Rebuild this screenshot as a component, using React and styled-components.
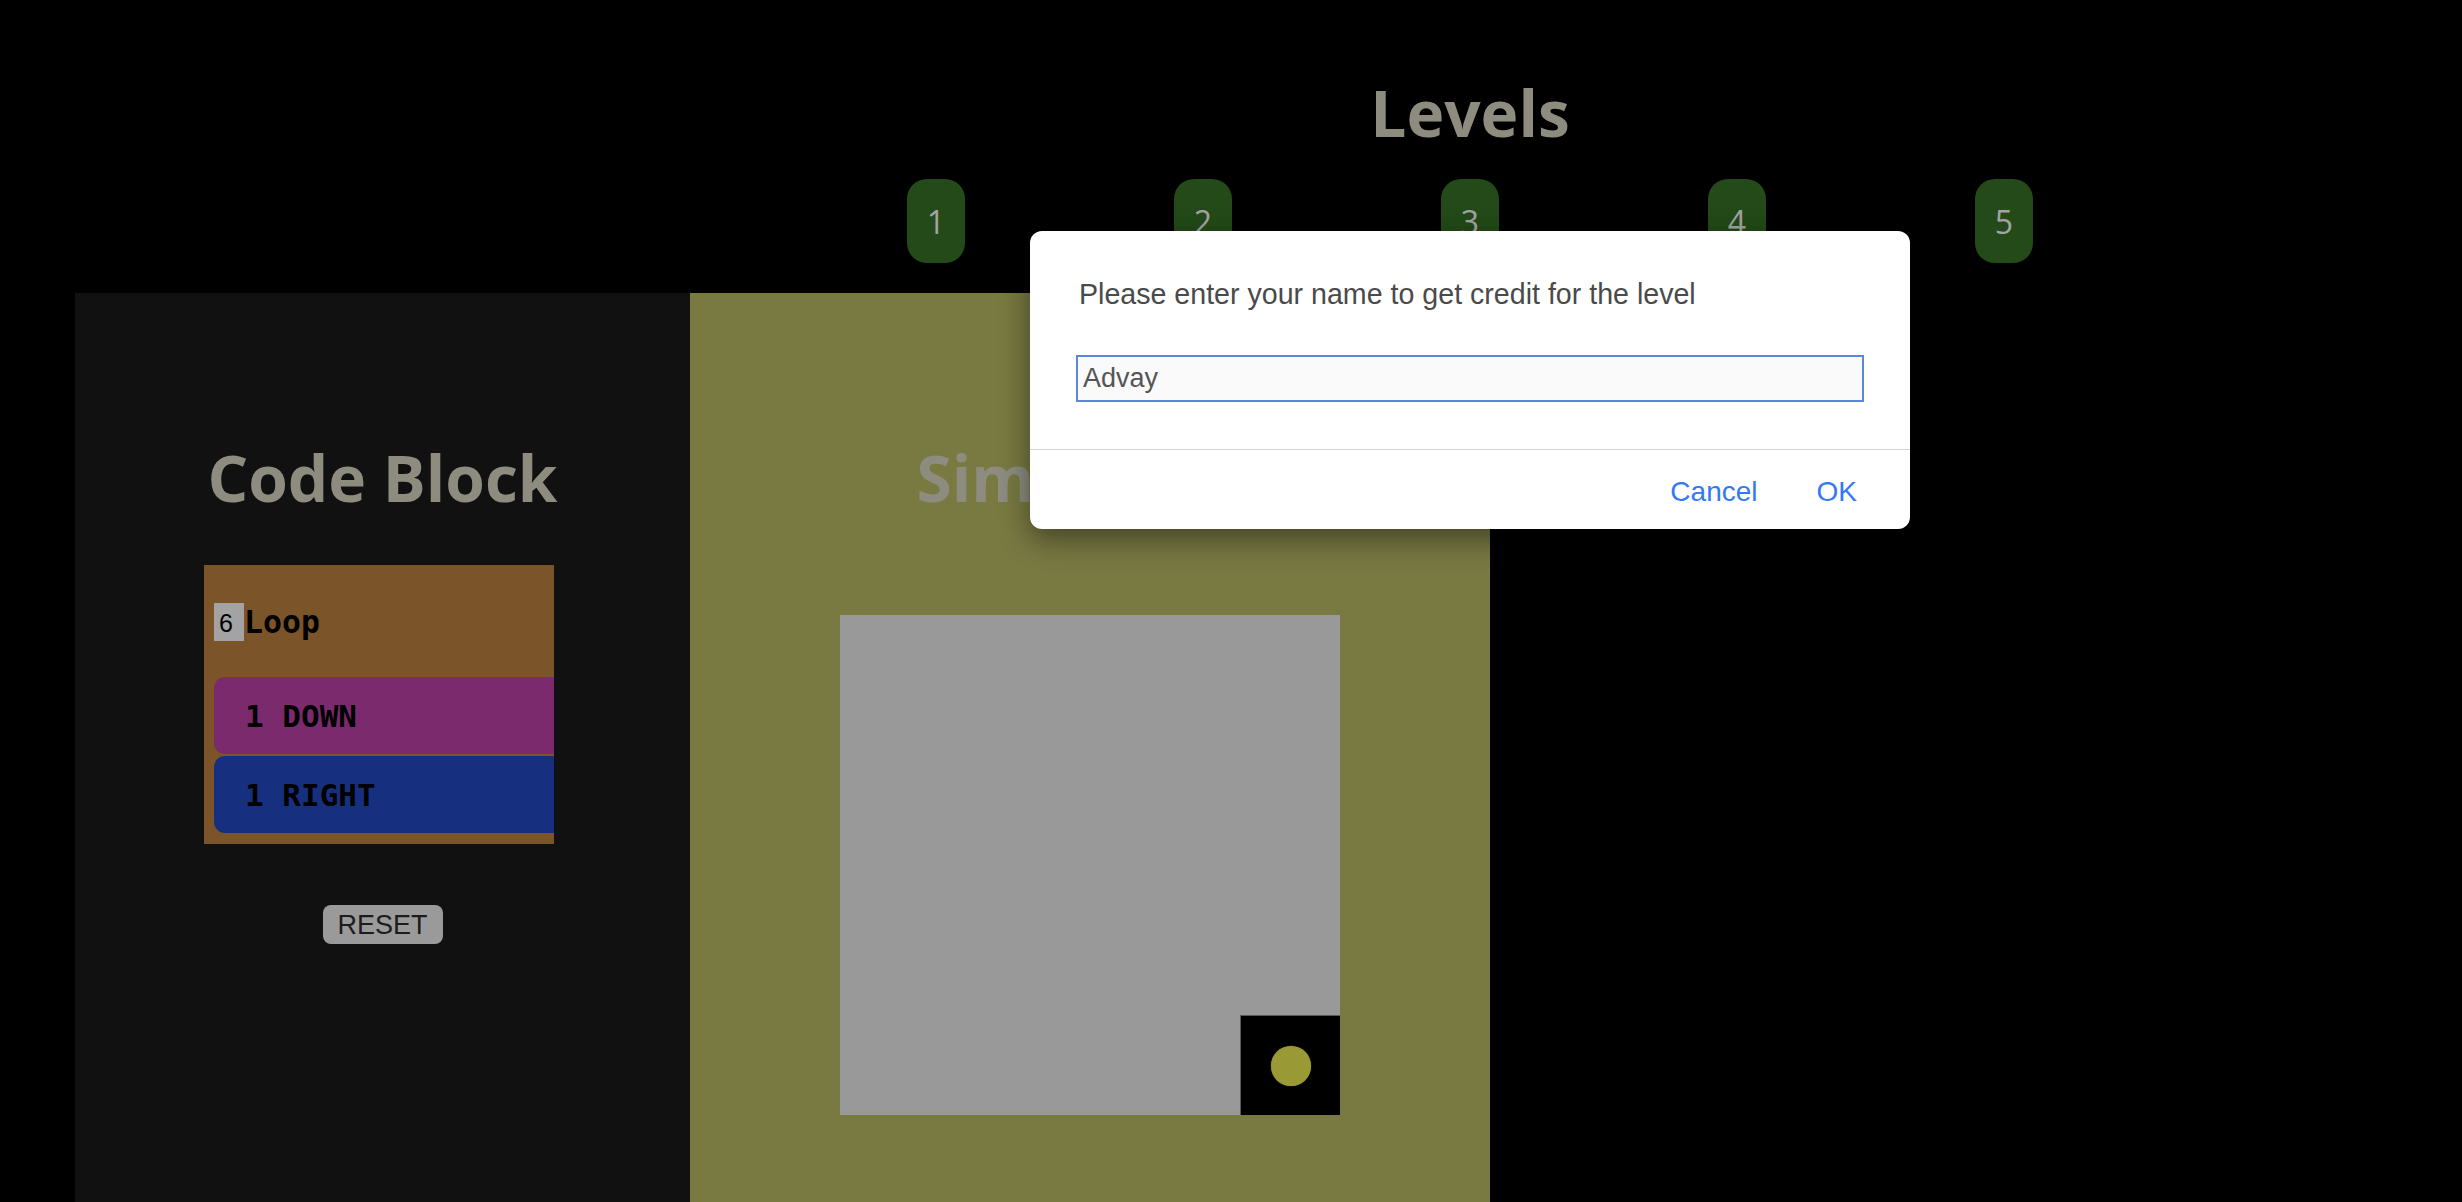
import React, { useState } from 'react';
import styled, { createGlobalStyle } from 'styled-components';

const levels = [1, 2, 3, 4, 5];
const GRID = 5;
const goal = { row: 4, col: 4 };

const commands = [
  { label: '1 DOWN', color: '#7c2a6e' },
  { label: '1 RIGHT', color: '#16307f' },
];

const App = () => {
  const [name, setName] = useState('Advay');
  const [loops, setLoops] = useState('6');

  const cells = Array(GRID * GRID)
    .fill(0)
    .map((e, i) => i);

  return (
    <>
      <GlobalStyle />
      <StyledHeader>
        <StyledTitle>Levels</StyledTitle>
        <StyledLevelRow>
          {levels.map((level) => (
            <StyledLevelButton key={level}>{level}</StyledLevelButton>
          ))}
        </StyledLevelRow>
      </StyledHeader>

      <StyledPanels>
        <StyledCodePanel>
          <StyledPanelTitle>Code Block</StyledPanelTitle>
          <StyledLoopBlock>
            <StyledLoopHead>
              <StyledLoopCount
                value={loops}
                onChange={(e) => setLoops(e.target.value)}
              />
              Loop
            </StyledLoopHead>
            {commands.map((cmd) => (
              <StyledCommand key={cmd.label} color={cmd.color}>
                {cmd.label}
              </StyledCommand>
            ))}
          </StyledLoopBlock>
          <StyledResetButton>RESET</StyledResetButton>
        </StyledCodePanel>

        <StyledSimPanel>
          <StyledPanelTitle>Simulation</StyledPanelTitle>
          <StyledGrid>
            {cells.map((i) => {
              const isGoal =
                Math.floor(i / GRID) === goal.row && i % GRID === goal.col;
              return (
                <StyledCell key={i} isGoal={isGoal}>
                  {isGoal && <StyledBall />}
                </StyledCell>
              );
            })}
          </StyledGrid>
        </StyledSimPanel>
      </StyledPanels>

      <StyledDialog>
        <StyledDialogBody>
          <StyledDialogMessage>
            Please enter your name to get credit for the level
          </StyledDialogMessage>
          <StyledDialogInput
            value={name}
            onChange={(e) => setName(e.target.value)}
          />
        </StyledDialogBody>
        <StyledDialogFooter>
          <StyledDialogButton>Cancel</StyledDialogButton>
          <StyledDialogButton>OK</StyledDialogButton>
        </StyledDialogFooter>
      </StyledDialog>
    </>
  );
};

export default App;

const GlobalStyle = createGlobalStyle`
  html, body {
    margin: 0;
    background: #000;
    overflow: hidden;
  }
  body {
    font-family: "Open Sans", "Liberation Sans", sans-serif;
  }
`;

const StyledHeader = styled.header`
  display: flex;
  flex-direction: column;
  align-items: center;
  padding-left: 478px;
`;

const StyledTitle = styled.h1`
  margin: 0;
  padding-top: 69px;
  font-family: "Open Sans", sans-serif;
  font-weight: 700;
  font-size: 64px;
  line-height: 87px;
  color: #8d8c7f;
`;

const StyledLevelRow = styled.div`
  display: flex;
  gap: 209px;
  margin-top: 23px;
`;

const StyledLevelButton = styled.button`
  width: 58px;
  height: 84px;
  padding: 0;
  border: 0;
  border-radius: 20px;
  background: #234a18;
  color: #a3a3a3;
  font-family: "Open Sans", sans-serif;
  font-size: 32px;
  cursor: pointer;
`;

const StyledPanels = styled.main`
  display: flex;
  margin: 30px 0 0 75px;
  height: 909px;
`;

const StyledPanel = styled.section`
  display: flex;
  flex-direction: column;
  align-items: center;
  padding-top: 141px;
`;

const StyledCodePanel = styled(StyledPanel)`
  width: 615px;
  background: #111111;
`;

const StyledSimPanel = styled(StyledPanel)`
  width: 800px;
  background: #797942;
`;

const StyledPanelTitle = styled.h2`
  margin: 0;
  font-family: "Open Sans", sans-serif;
  font-weight: 700;
  font-size: 64px;
  line-height: 87px;
  color: #8d8c7f;
`;

const StyledLoopBlock = styled.div`
  width: 350px;
  margin: 44px 0 0 -7px;
  padding: 38px 0 11px 10px;
  box-sizing: border-box;
  overflow: hidden;
  background: #7b5429;
`;

const StyledLoopHead = styled.div`
  display: flex;
  align-items: center;
  height: 38px;
  margin-bottom: 36px;
  font-family: "DejaVu Sans Mono", monospace;
  font-weight: 700;
  font-size: 31.5px;
  color: #000;
`;

const StyledLoopCount = styled.input`
  width: 30px;
  height: 38px;
  padding: 3px 0 0 5px;
  box-sizing: border-box;
  border: 0;
  outline: 0;
  background: #a3a3a3;
  color: #000;
  font-family: "Liberation Sans", sans-serif;
  font-size: 25px;
`;

const StyledCommand = styled.div`
  display: flex;
  align-items: center;
  width: 380px;
  height: 77px;
  margin-bottom: 2px;
  padding-left: 31px;
  box-sizing: border-box;
  border-radius: 11px;
  background: ${(props) => props.color};
  font-family: "DejaVu Sans Mono", monospace;
  font-weight: 700;
  font-size: 31px;
  color: #000;

  &:last-child {
    margin-bottom: 0;
  }
`;

const StyledResetButton = styled.button`
  width: 120px;
  height: 39px;
  margin-top: 61px;
  padding: 2px 0 0;
  border: 0;
  border-radius: 8px;
  background: #9a9a9a;
  color: #1c1c1c;
  font-family: "Liberation Sans", sans-serif;
  font-size: 27px;
  cursor: pointer;
`;

const StyledGrid = styled.div`
  display: grid;
  grid-template-columns: repeat(5, 100px);
  grid-template-rows: repeat(5, 100px);
  margin-top: 94px;
  background: #999999;
`;

const StyledCell = styled.div`
  display: flex;
  align-items: center;
  justify-content: center;
  box-sizing: border-box;
  background: ${(props) => (props.isGoal ? '#000' : '#999999')};
  border-top: ${(props) => (props.isGoal ? '1px solid #5a5a5a' : '0')};
  border-left: ${(props) => (props.isGoal ? '1px solid #5a5a5a' : '0')};
`;

const StyledBall = styled.div`
  width: 40px;
  height: 40px;
  border-radius: 50%;
  background: #999935;
  box-shadow: 0 0 1px #999935;
`;

const StyledDialog = styled.div`
  position: absolute;
  top: 231px;
  left: 1030px;
  width: 880px;
  height: 298px;
  box-sizing: border-box;
  border-radius: 12px;
  background: #fff;
  box-shadow: 0 10px 30px rgba(0, 0, 0, 0.45);
  font-family: "Liberation Sans", sans-serif;
`;

const StyledDialogBody = styled.div`
  display: flex;
  flex-direction: column;
  padding: 47px 46px 47px;
  border-bottom: 1px solid #d4d4d4;
`;

const StyledDialogMessage = styled.p`
  margin: 0 0 45px 3px;
  font-size: 28.6px;
  line-height: 32px;
  color: #4a4a4a;
`;

const StyledDialogInput = styled.input`
  height: 47px;
  padding: 0 5px;
  box-sizing: border-box;
  border: 2px solid #5b86dc;
  outline: 0;
  background: #fafafa;
  color: #555;
  font-family: "Liberation Sans", sans-serif;
  font-size: 27px;
`;

const StyledDialogFooter = styled.div`
  display: flex;
  align-items: center;
  justify-content: flex-end;
  gap: 59px;
  height: 78px;
  padding: 5px 53px 0 0;
  box-sizing: border-box;
`;

const StyledDialogButton = styled.button`
  padding: 0;
  border: 0;
  background: none;
  color: #3478f6;
  font-family: "Liberation Sans", sans-serif;
  font-size: 28px;
  cursor: pointer;
`;
